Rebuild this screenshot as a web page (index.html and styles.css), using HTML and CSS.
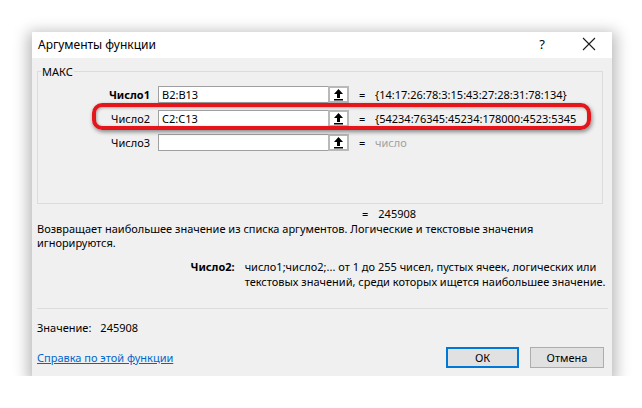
FILE: index.html
```html
<!DOCTYPE html>
<html lang="ru">
<head>
<meta charset="utf-8">
<title>Аргументы функции</title>
<link rel="stylesheet" href="styles.css">
</head>
<body>
<div class="dialog">
  <div class="titlebar">
    <span class="title">Аргументы функции</span>
    <span class="help">?</span>
    <svg class="close" width="14" height="14" viewBox="0 0 14 14"><path d="M1 1 L13 13 M13 1 L1 13" stroke="#1a1a1a" stroke-width="1.1" fill="none"/></svg>
  </div>
  <div class="body">
    <fieldset class="group">
      <legend>МАКС</legend>
      <div class="args">
        <div class="row">
          <span class="label req">Число1</span>
          <span class="input">B2:B13</span>
          <span class="pick"><svg width="11" height="13" viewBox="0 0 11 13"><path d="M5.5 1 L10 6 H7 V10 H4 V6 H1 Z" fill="#000"/><rect x="1" y="11" width="9" height="1.5" fill="#000"/></svg></span>
          <span class="eq">=</span>
          <span class="val">{14:17:26:78:3:15:43:27:28:31:78:134}</span>
        </div>
        <div class="row">
          <span class="label">Число2</span>
          <span class="input">C2:C13</span>
          <span class="pick"><svg width="11" height="13" viewBox="0 0 11 13"><path d="M5.5 1 L10 6 H7 V10 H4 V6 H1 Z" fill="#000"/><rect x="1" y="11" width="9" height="1.5" fill="#000"/></svg></span>
          <span class="eq">=</span>
          <span class="val">{54234:76345:45234:178000:4523:5345</span>
        </div>
        <div class="row">
          <span class="label">Число3</span>
          <span class="input"></span>
          <span class="pick"><svg width="11" height="13" viewBox="0 0 11 13"><path d="M5.5 1 L10 6 H7 V10 H4 V6 H1 Z" fill="#000"/><rect x="1" y="11" width="9" height="1.5" fill="#000"/></svg></span>
          <span class="eq">=</span>
          <span class="val hint">число</span>
        </div>
        <div class="highlight"></div>
      </div>
    </fieldset>
    <div class="result"><span class="eq2">=</span><span>245908</span></div>
    <p class="desc">Возвращает наибольшее значение из списка аргументов. Логические и текстовые значения игнорируются.</p>
    <div class="argdesc">
      <span class="argname">Число2:</span>
      <span class="argtext">число1;число2;... от 1 до 255 чисел, пустых ячеек, логических или текстовых значений, среди которых ищется наибольшее значение.</span>
    </div>
    <div class="sep"></div>
    <div class="value"><span>Значение:</span><span class="num">245908</span></div>
    <div class="footer">
      <a class="link" href="#">Справка по этой функции</a>
      <div class="buttons">
        <button class="btn ok">ОК</button>
        <button class="btn">Отмена</button>
      </div>
    </div>
  </div>
</div>
</body>
</html>
```
FILE: styles.css
```css
html, body {
  margin: 0;
  padding: 0;
  background: #ffffff;
}
body {
  padding: 32px 0 0 32px;
  font-family: "Noto Sans", "Open Sans", sans-serif;
  font-size: 11px;
  color: #000;
}
.dialog {
  width: 580px;
  height: 344px;
  background: #f0f0f0;
  box-shadow: 0 4px 14px 4px rgba(0,0,0,0.28);
  display: flex;
  flex-direction: column;
}
.titlebar {
  height: 26px;
  background: #ffffff;
  display: flex;
  align-items: center;
  padding-left: 6px;
  padding-bottom: 2px;
  box-sizing: border-box;
  font-size: 12px;
}
.title { flex: 1; }
.help {
  width: 20px;
  font-size: 13px;
  margin-right: 30px;
  text-align: center;
}
.close { margin-right: 16px; }
.body {
  flex: 1;
  padding: 6px 4px 0 5px;
  display: flex;
  flex-direction: column;
}
.group {
  margin: 0;
  padding: 6px 0 0 0;
  width: 566px;
  height: 140px;
  box-sizing: border-box;
  border: 1px solid #dcdcdc;
}
.group legend {
  padding: 0 1px;
  margin-left: 3px;
  font-size: 11px;
  color: #000;
}
.args {
  position: relative;
  display: flex;
  flex-direction: column;
  gap: 7px;
  padding-top: 1px;
}
.row {
  display: flex;
  align-items: center;
  height: 17px;
}
.label {
  width: 112px;
  text-align: right;
  padding-right: 8px;
}
.label.req { font-weight: bold; }
.input {
  width: 170px;
  height: 17px;
  box-sizing: border-box;
  background: #fff;
  border: 1px solid #a0a0a0;
  border-right: none;
  padding-left: 3px;
  line-height: 15px;
}
.pick {
  width: 21px;
  height: 17px;
  box-sizing: border-box;
  border: 2px solid #b9b9b9;
  background: #fff;
  display: flex;
  align-items: center;
  justify-content: center;
}
.eq {
  margin-left: 10px;
  width: 16px;
}
.hint { color: #a0a0a0; }
.highlight {
  position: absolute;
  left: 54px;
  top: 18px;
  width: 499px;
  height: 27px;
  box-sizing: border-box;
  border: 4px solid #e5161b;
  border-radius: 10px;
  box-shadow: 1px 2px 4px rgba(0,0,0,0.45), inset 1px 1px 3px rgba(0,0,0,0.3);
}
.result {
  margin: 2px 0 0 325px;
  display: flex;
  gap: 10px;
}
.desc {
  margin: 1px 0 0 0;
  width: 520px;
  line-height: 14px;
}
.argdesc {
  display: flex;
  margin-top: 9px;
}
.argname {
  width: 198px;
  text-align: right;
  font-weight: bold;
  padding-right: 10px;
}
.argtext {
  width: 364px;
  line-height: 15px;
}
.sep {
  margin-top: 19px;
  height: 1px;
  width: 571px;
  background: #dcdcdc;
}
.value {
  margin-top: 11px;
  display: flex;
  gap: 9px;
}
.footer {
  margin-top: 12px;
  display: flex;
  align-items: center;
  justify-content: space-between;
  width: 567px;
}
.link {
  color: #0066cc;
  text-decoration: underline;
}
.buttons {
  display: flex;
  gap: 11px;
}
.btn {
  font-family: inherit;
  font-size: 11px;
  width: 74px;
  height: 21px;
  background: #e1e1e1;
  border: 1px solid #adadad;
  padding: 0;
  color: #000;
}
.btn.ok {
  border: 2px solid #0078d7;
  width: 73px;
}
```
